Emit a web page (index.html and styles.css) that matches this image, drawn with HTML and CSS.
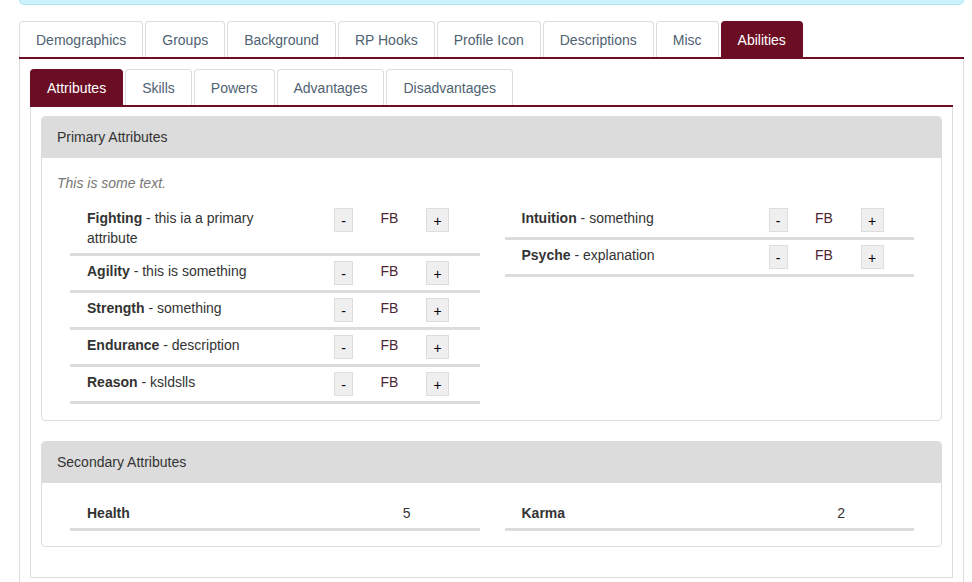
FILE: index.html
```html
<!DOCTYPE html>
<html>
<head>
<meta charset="utf-8">
<link rel="stylesheet" href="styles.css">
</head>
<body>
<div class="wrap">
  <div class="alert"></div>
  <ul class="tabs">
    <li><a>Demographics</a></li>
    <li><a>Groups</a></li>
    <li><a>Background</a></li>
    <li><a>RP Hooks</a></li>
    <li><a>Profile Icon</a></li>
    <li><a>Descriptions</a></li>
    <li><a>Misc</a></li>
    <li class="active"><a>Abilities</a></li>
  </ul>
  <div class="pane">
    <ul class="tabs">
      <li class="active"><a>Attributes</a></li>
      <li><a>Skills</a></li>
      <li><a>Powers</a></li>
      <li><a>Advantages</a></li>
      <li><a>Disadvantages</a></li>
    </ul>
    <div class="pane inner">
      <div class="panel">
        <div class="panel-heading">Primary Attributes</div>
        <div class="panel-body primary">
          <p class="note">This is some text.</p>
          <div class="cols">
            <div class="col">
              <div class="attr"><div class="label"><b>Fighting</b> - this ia a primary attribute</div><button class="btn minus">-</button><div class="value">FB</div><button class="btn plus">+</button></div>
              <div class="attr"><div class="label"><b>Agility</b> - this is something</div><button class="btn minus">-</button><div class="value">FB</div><button class="btn plus">+</button></div>
              <div class="attr"><div class="label"><b>Strength</b> - something</div><button class="btn minus">-</button><div class="value">FB</div><button class="btn plus">+</button></div>
              <div class="attr"><div class="label"><b>Endurance</b> - description</div><button class="btn minus">-</button><div class="value">FB</div><button class="btn plus">+</button></div>
              <div class="attr"><div class="label"><b>Reason</b> - ksldslls</div><button class="btn minus">-</button><div class="value">FB</div><button class="btn plus">+</button></div>
            </div>
            <div class="col">
              <div class="attr"><div class="label"><b>Intuition</b> - something</div><button class="btn minus">-</button><div class="value">FB</div><button class="btn plus">+</button></div>
              <div class="attr"><div class="label"><b>Psyche</b> - explanation</div><button class="btn minus">-</button><div class="value">FB</div><button class="btn plus">+</button></div>
            </div>
          </div>
        </div>
      </div>
      <div class="panel">
        <div class="panel-heading">Secondary Attributes</div>
        <div class="panel-body">
          <div class="cols">
            <div class="col">
              <div class="sec"><div class="sec-label"><b>Health</b></div><div class="sec-value">5</div></div>
            </div>
            <div class="col">
              <div class="sec"><div class="sec-label"><b>Karma</b></div><div class="sec-value">2</div></div>
            </div>
          </div>
        </div>
      </div>
    </div>
  </div>
</div>
</body>
</html>
```

FILE: styles.css
```css
html, body {
  margin: 0;
  padding: 0;
  background: #fff;
}
body {
  font-family: "Liberation Sans", Arial, sans-serif;
  font-size: 14px;
  line-height: 20px;
  color: #333;
  overflow: hidden;
}
.wrap {
  margin-left: 19px;
  width: 945px;
}
.alert {
  height: 4px;
  background: #cdf2fb;
  border: 1px solid #aee8f6;
  border-top: 0;
  border-radius: 0 0 5px 5px;
  margin-bottom: 16px;
}
.tabs {
  list-style: none;
  margin: 0;
  padding: 0;
  display: flex;
  border-bottom: 2px solid #6b0e23;
}
.tabs li {
  margin-right: 2px;
}
.tabs a {
  display: block;
  padding: 8px 16px 7px;
  border: 1px solid #ddd;
  border-bottom: 0;
  border-radius: 4px 4px 0 0;
  color: #4f6272;
  line-height: 20px;
}
.tabs li.active a {
  background: #6b0e23;
  border-color: #6b0e23;
  color: #fff;
}
.pane {
  border: 1px solid #ddd;
  border-top: 0;
  padding: 10px;
}
.pane.inner {
  padding-top: 9px;
}
.panel {
  border: 1px solid #ddd;
  border-radius: 4px;
  margin-bottom: 20px;
}
.panel-heading {
  background: #dcdcdc;
  padding: 10px 15px;
  border-bottom: 1px solid #dcdcdc;
  border-radius: 3px 3px 0 0;
  color: #333;
}
.panel-body {
  padding: 15px;
}
.panel-body.primary {
  padding-bottom: 16px;
}
.note {
  margin: 0 0 10px;
  font-style: italic;
  color: #777;
}
.cols {
  display: grid;
  grid-template-columns: 1fr 1fr;
  align-items: start;
}
.col {
  padding: 0 12px 0 13px;
}
.attr {
  display: flex;
  align-items: flex-start;
  padding: 5px 0 5px 17px;
  border-bottom: 3px solid #dcdcdc;
}
.label {
  width: 200px;
  margin-right: 47px;
}
.btn {
  height: 24px;
  padding: 2px 0 0;
  margin: 0;
  border: 1px solid #ddd;
  background: #efefef;
  color: #000;
  font-family: "Liberation Sans", Arial, sans-serif;
  font-size: 14px;
  line-height: 20px;
}
.minus {
  width: 19px;
}
.plus {
  width: 23px;
}
.value {
  width: 73px;
  text-align: center;
  color: #4d2636;
}
.sec {
  display: flex;
  padding: 5px 0 5px 17px;
  border-bottom: 3px solid #dcdcdc;
}
.sec-label {
  width: 247px;
}
.sec-value {
  flex: 1;
  text-align: center;
}
```
